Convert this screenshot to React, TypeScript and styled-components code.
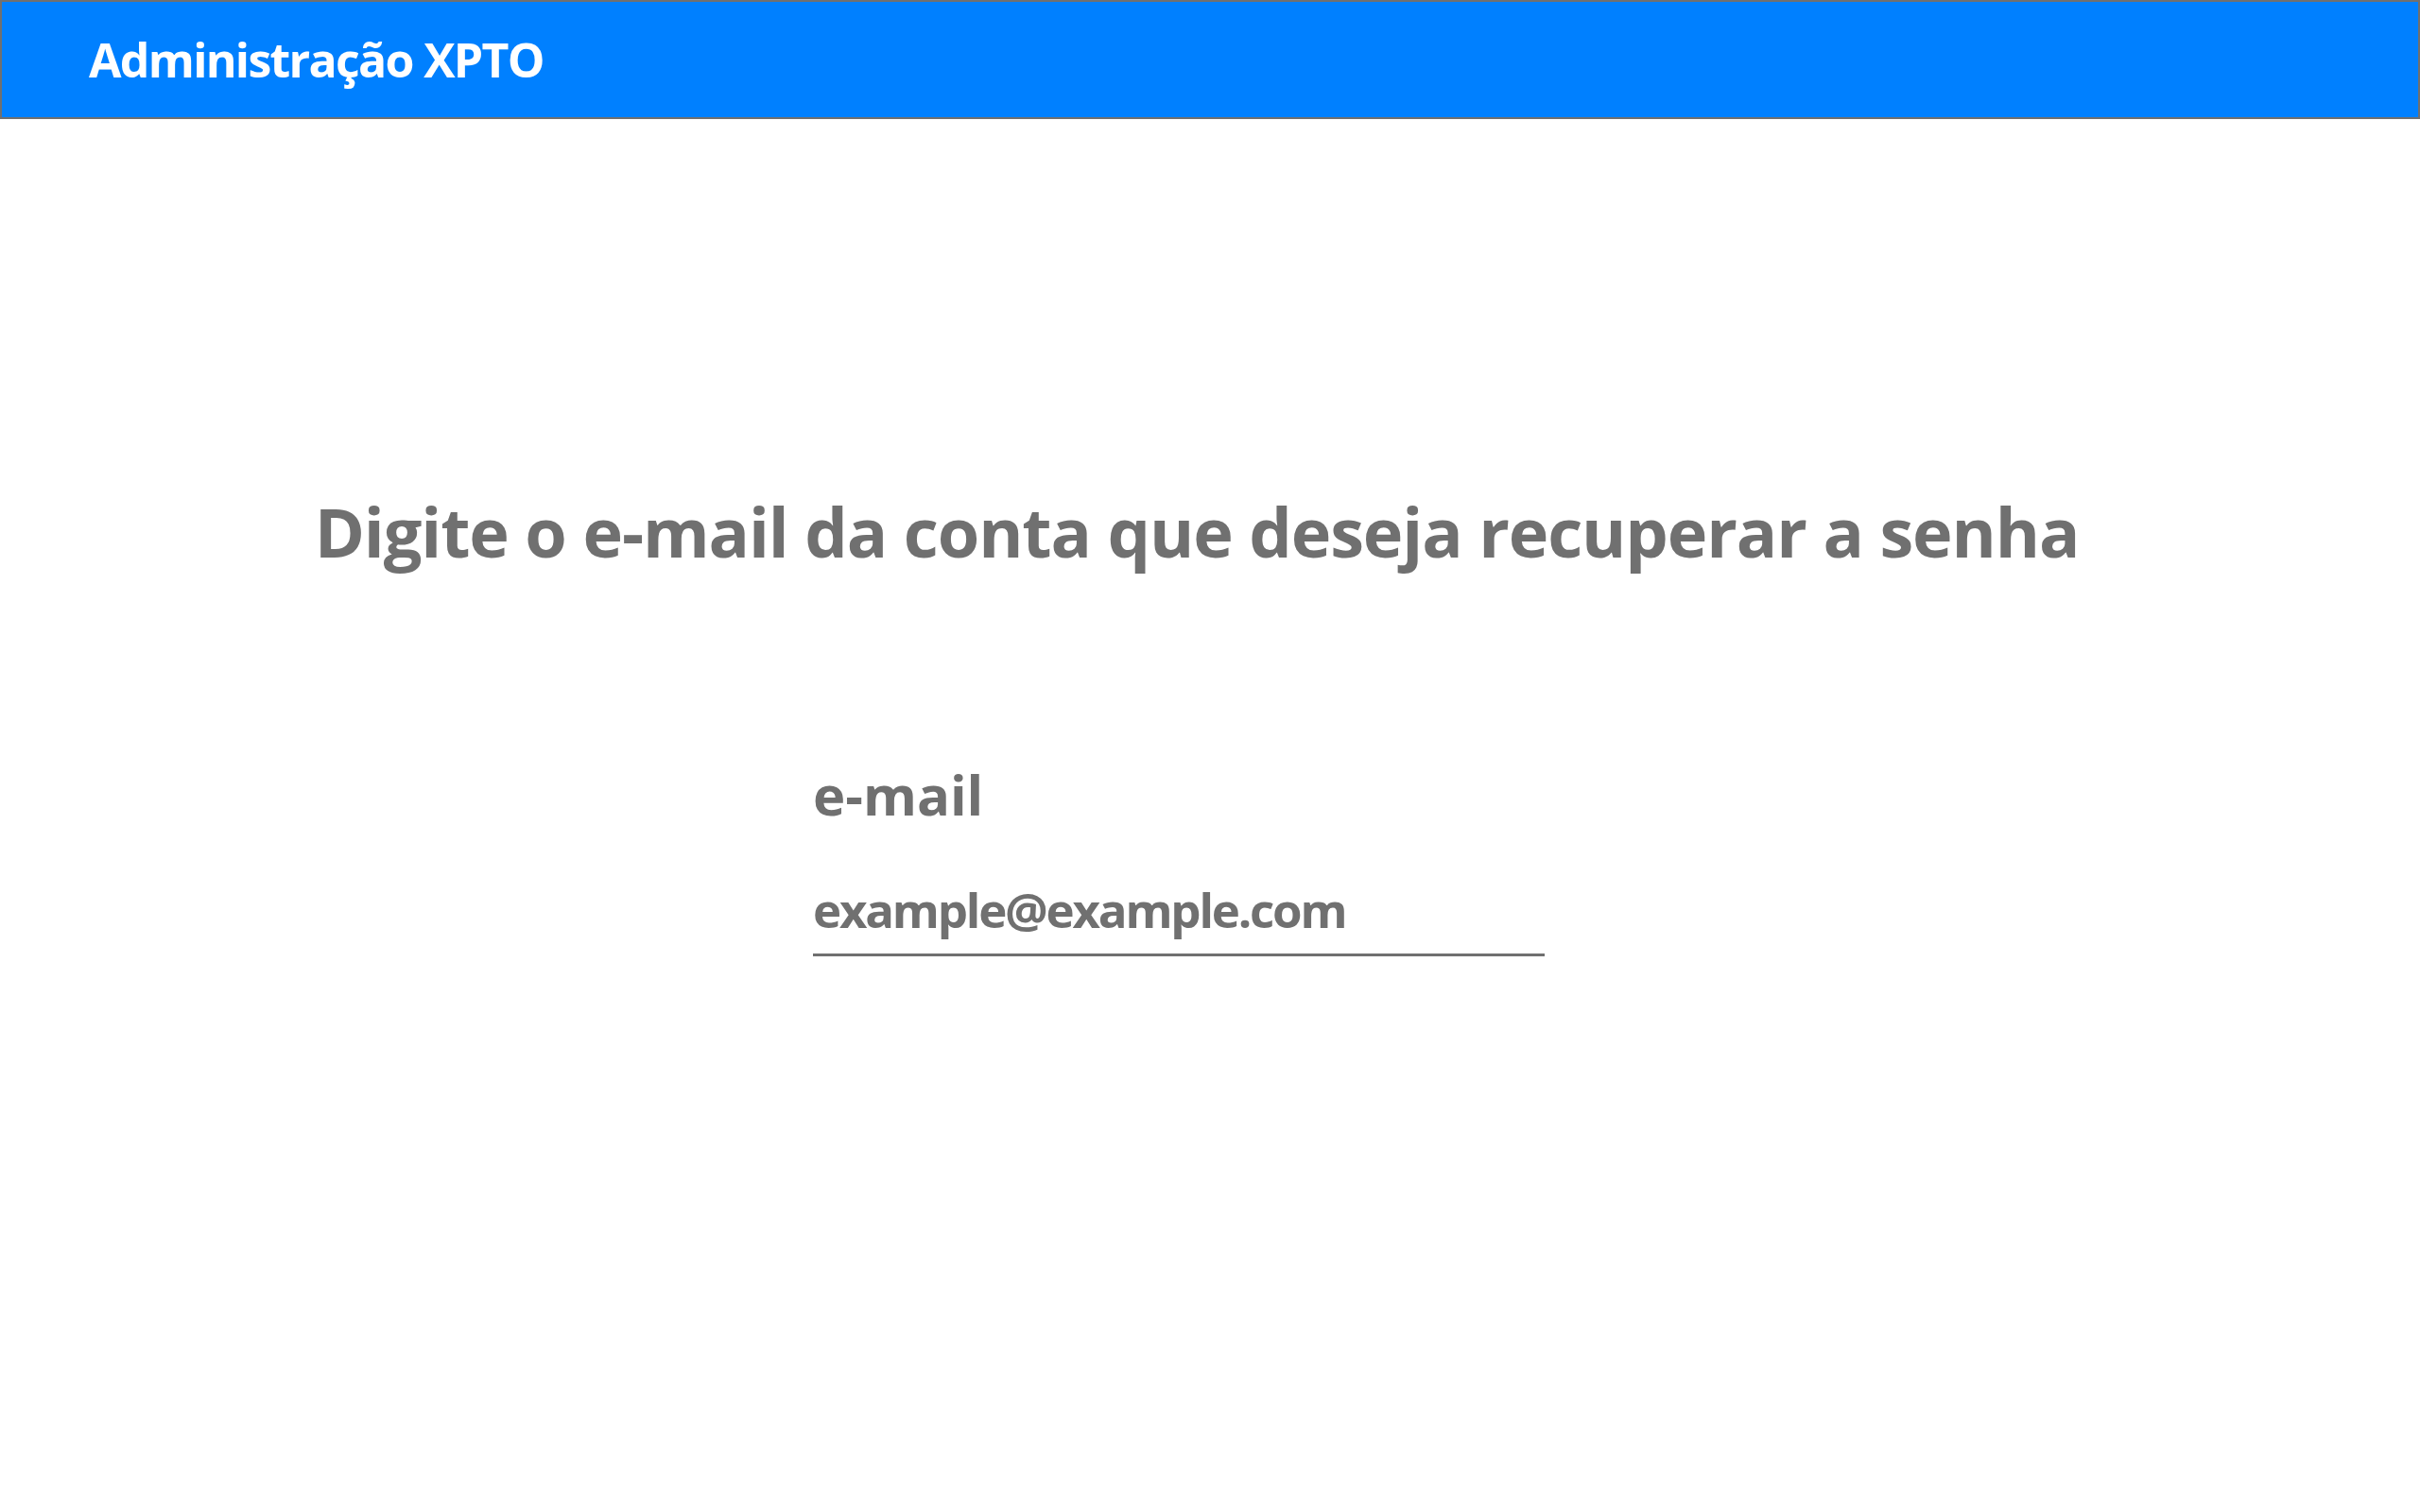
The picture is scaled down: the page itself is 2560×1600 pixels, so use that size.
import React from "react";
import styled, { createGlobalStyle } from "styled-components";

const GlobalStyle = createGlobalStyle`
  html, body {
    margin: 0;
    padding: 0;
    background: #ffffff;
    font-family: "Open Sans", "Noto Sans", "Liberation Sans", sans-serif;
  }
  * { box-sizing: border-box; }
`;

const Page = styled.div`
  display: flex;
  flex-direction: column;
  min-height: 1600px;
`;

const Header = styled.header`
  display: flex;
  align-items: center;
  height: 126px;
  padding-left: 92px;
  background: #0080ff;
  border: 2px solid #707070;
`;

const Brand = styled.h1`
  margin: 0;
  font-size: 50px;
  font-weight: 700;
  letter-spacing: -1.7px;
  color: #ffffff;
  line-height: normal;
`;

const Main = styled.main`
  display: flex;
  flex-direction: column;
  align-items: flex-start;
  padding-top: 400px;
`;

const Heading = styled.h2`
  align-self: stretch;
  margin: 0 28px 0 0;
  text-align: center;
  font-size: 72px;
  font-weight: 700;
  letter-spacing: -1.1px;
  line-height: 1;
  color: #707070;
`;

const Form = styled.form`
  display: flex;
  flex-direction: column;
  width: 774px;
  margin: 214px 0 0 860px;
`;

const Label = styled.label`
  font-size: 58px;
  font-weight: 700;
  line-height: 1;
  color: #707070;
`;

const Input = styled.input`
  margin-top: 65px;
  width: 100%;
  height: 77px;
  padding: 0 0 20px 0;
  border: none;
  border-bottom: 3px solid #707070;
  outline: none;
  background: transparent;
  font-family: inherit;
  font-size: 51px;
  font-weight: 700;
  letter-spacing: -2.2px;
  color: #707070;
  &::placeholder {
    color: #707070;
    opacity: 1;
  }
`;

export default function App() {
  return (
    <>
      <GlobalStyle />
      <Page>
        <Header>
          <Brand>Administração XPTO</Brand>
        </Header>
        <Main>
          <Heading>Digite o e-mail da conta que deseja recuperar a senha</Heading>
          <Form onSubmit={(e) => e.preventDefault()}>
            <Label htmlFor="email">e-mail</Label>
            <Input id="email" type="email" placeholder="example@example.com" />
          </Form>
        </Main>
      </Page>
    </>
  );
}
